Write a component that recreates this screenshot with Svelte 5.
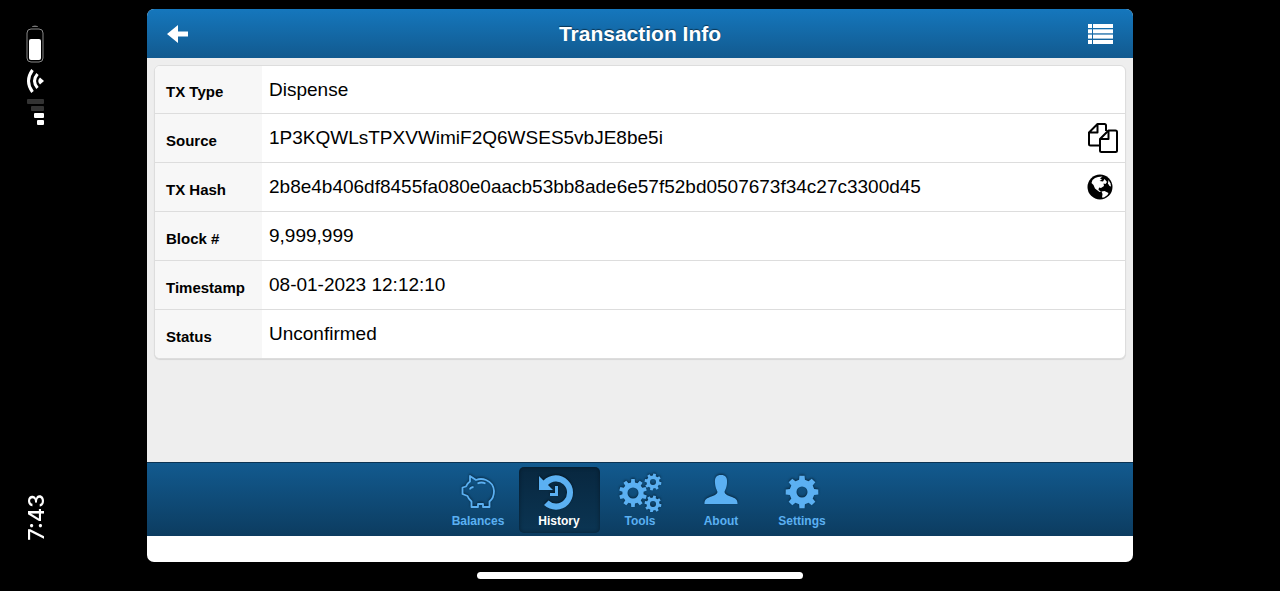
<script lang="ts">
	const fields = [
		{ label: "TX Type", value: "Dispense", action: "" },
		{ label: "Source", value: "1P3KQWLsTPXVWimiF2Q6WSES5vbJE8be5i", action: "copy" },
		{
			label: "TX Hash",
			value: "2b8e4b406df8455fa080e0aacb53bb8ade6e57f52bd0507673f34c27c3300d45",
			action: "explorer",
		},
		{ label: "Block #", value: "9,999,999", action: "" },
		{ label: "Timestamp", value: "08-01-2023 12:12:10", action: "" },
		{ label: "Status", value: "Unconfirmed", action: "" },
	];

	const tabs = ["Balances", "History", "Tools", "About", "Settings"];
	let activeTab = $state("History");

	// outline of a cog with a round hole, r = outer radius
	function cog(cx: number, cy: number, r: number, hole: number, teeth = 8, turn = 0) {
		const root = r * 0.76;
		const step = (Math.PI * 2) / teeth;
		const points: string[] = [];
		for (let i = 0; i < teeth; i++) {
			const a = i * step + turn - Math.PI / 2;
			for (const [radius, offset] of [
				[root, -0.3],
				[r, -0.2],
				[r, 0.2],
				[root, 0.3],
			]) {
				const t = a + offset * step;
				points.push(`${(cx + radius * Math.cos(t)).toFixed(2)} ${(cy + radius * Math.sin(t)).toFixed(2)}`);
			}
		}
		return (
			`M${points.join("L")}Z` +
			`M${cx - hole} ${cy}a${hole} ${hole} 0 1 0 ${hole * 2} 0a${hole} ${hole} 0 1 0 ${-hole * 2} 0Z`
		);
	}
</script>

<div class="device">
	<aside class="status">
		<svg width="18" height="102" viewBox="0 0 18 102" aria-hidden="true">
			<path d="M6 2Q6 .5 9 .5T12 2Z" fill="#777" />
			<rect x="1" y="4" width="16" height="33" rx="4" fill="none" stroke="#888" />
			<rect x="3" y="14" width="12" height="21" rx="2" fill="#fff" />
			<g fill="none" stroke="#fff" stroke-width="3">
				<path d="M6.500 45Q-1.500 56 6.500 67" />
				<path d="M11.500 49Q5.500 56 11.500 63" />
			</g>
			<path d="M18 56l-4-3.500q-3.500 3.500 0 7Z" fill="#fff" />
			<g fill="#333">
				<rect x="1" y="74" width="17" height="5" rx="1" />
				<rect x="5" y="81" width="13" height="5" rx="1" />
			</g>
			<g fill="#fff">
				<rect x="8" y="88" width="10" height="5" rx="1" />
				<rect x="11" y="95" width="7" height="5" rx="1" />
			</g>
		</svg>
		<time>7:43</time>
	</aside>

	<main class="app">
		<header class="titlebar">
			<button type="button" aria-label="Back">
				<svg width="26" height="20" viewBox="0 0 26 20" fill="#fff">
					<path d="M1 10L12 1V7.500H22V12.500H12V19Z" />
				</svg>
			</button>
			<h1>Transaction Info</h1>
			<button type="button" aria-label="Menu">
				<svg width="26" height="22" viewBox="0 0 26 22" fill="#fff">
					{#each [1, 6.3, 11.6, 17] as y}
						<rect x="0" {y} width="4" height="4" />
						<rect x="5" {y} width="20" height="4" />
					{/each}
				</svg>
			</button>
		</header>

		<section class="content">
			<table>
				<tbody>
					{#each fields as field}
						<tr>
							<th scope="row">{field.label}</th>
							<td>
								<div class="value">
									<span>{field.value}</span>
									{#if field.action === "copy"}
										<button type="button" aria-label="Copy address">
											<svg width="30" height="30" viewBox="0 0 30 30" fill="none" stroke="#000" stroke-width="2" stroke-linejoin="round">
												<path d="M11 22.500H2.500Q1 22.500 1 21V9.500L9.500 1H16.500Q18 1 18 2.500V8M9.500 1V9.500H1" />
												<path d="M20.500 7.500H27.500Q29 7.500 29 9V27.500Q29 29 27.500 29H13.500Q12 29 12 27.500V16Z" fill="#fff" />
												<path d="M20.500 7.500V16H12" />
											</svg>
										</button>
									{:else if field.action === "explorer"}
										<button type="button" class="globe" aria-label="Open in explorer">
											<svg width="26" height="26" viewBox="0 0 26 26">
												<circle cx="13" cy="13" r="12.500" />
												<path
													d="M4.500 9L5.500 6L8 4L11 3L15.500 2.500L13 4.500L15 5.500L12.500 7L16 7.500L17.500 5L20 8L18.500 10L16.500 9.500L17 12L14 14L12 13.500L11.500 16L14 17.500L12.500 18L8 14.500L6.500 11Z"
													fill="#fff"
												/>
												<path d="M14.500 17.500L17.500 17L21.500 19L20.500 21L17 23.500L15 23.500L15.500 20Z" fill="#fff" />
												<path d="M21.500 6L23.500 9.500L24 12.500L22.500 12L21 9.500Z" fill="#fff" />
											</svg>
										</button>
									{/if}
								</div>
							</td>
						</tr>
					{/each}
				</tbody>
			</table>
		</section>

		<nav class="tabbar">
			{#each tabs as tab}
				<button type="button" class:active={tab === activeTab} onclick={() => (activeTab = tab)}>
					<svg width="44" height="40" viewBox="0 0 44 40" fill="currentColor" fill-rule="evenodd">
						{#if tab === "Balances"}
							<g fill="none" stroke="currentColor" stroke-width="1.800" stroke-linejoin="round">
								<path
									d="M14 4L20 8Q25 6 30 8Q37.500 11 38 19Q38 26 33.500 29.500V35H27V32H22V35H15.500V29.500Q12.500 27 11.500 24L6.500 22V15.500L10 14.500Q11 11.500 14 9.500Z"
								/>
								<path d="M21.500 11.500Q25.500 9.500 29.500 11.500" />
								<path d="M14 17.500Q14 15.500 17.500 15" />
							</g>
						{:else if tab === "History"}
							<path
								d="M2 4L6.500 8.500A17.200 17.200 0 1 1 7 33L11.500 28.500A11 11 0 1 0 11 13L16 18H2Z"
							/>
							<path d="M18 14H21V24H13V21H18Z" />
						{:else if tab === "Tools"}
							<path d={cog(15, 21, 14, 5.5, 10)} />
							<path d={cog(35, 10, 8.5, 3, 8, 0.2)} />
							<path d={cog(35, 32, 8.5, 3, 8, 0.2)} />
						{:else if tab === "About"}
							<path
								d="M22 3C26.500 3 28.500 5.500 28 11C27.700 16 26 18 25.500 20C26 22.500 29 23.500 33 25C37.500 26.800 38.500 28 38.500 32H5.500C5.500 28 6.500 26.800 11 25C15 23.500 18 22.500 18.500 20C18 18 16.300 16 16 11C15.500 5.500 17.500 3 22 3Z"
							/>
						{:else}
							<path d={cog(22, 20, 16.5, 5.5)} />
						{/if}
					</svg>
					<span>{tab}</span>
				</button>
			{/each}
		</nav>
	</main>

	<div class="home"></div>
</div>

<style>
	:global(body) {
		margin: 0;
		background: #000;
	}
	.device {
		display: grid;
		grid-template-columns: 147px 1fr 147px;
		grid-template-rows: 1fr auto;
		row-gap: 10px;
		box-sizing: border-box;
		min-height: 100vh;
		padding: 9px 0 12px;
		background: #000;
		font-family: "Liberation Sans", Arial, sans-serif;
	}
	button {
		border: 0;
		padding: 0;
		background: none;
		font: inherit;
		cursor: pointer;
	}
	svg {
		display: block;
	}
	.status {
		display: flex;
		flex-direction: column;
		justify-content: space-between;
		align-items: flex-start;
		padding: 16px 0 21px 26px;
	}
	time {
		color: #fff;
		font: 500 22px/20px Inter, sans-serif;
		writing-mode: vertical-rl;
		transform: rotate(180deg);
	}
	.app {
		display: flex;
		flex-direction: column;
		overflow: hidden;
		padding-bottom: 26px;
		border-radius: 7px;
		background: #fff;
	}
	.titlebar {
		display: flex;
		align-items: center;
		justify-content: space-between;
		height: 49px;
		padding: 0 19px;
		background: linear-gradient(#1577bd, #125a8f);
	}
	h1 {
		margin: 0;
		color: #fff;
		font-size: 21px;
		line-height: 24px;
		text-shadow: 0 -1px 1px rgba(0, 0, 0, 0.5);
	}
	.content {
		flex: 1;
		padding: 7px;
		background: #eee;
	}
	table {
		width: 100%;
		border: 1px solid #ddd;
		border-radius: 6px;
		border-spacing: 0;
		overflow: hidden;
		background: #fff;
		box-shadow: 0 1px 1px rgba(0, 0, 0, 0.1);
	}
	th,
	td {
		box-sizing: border-box;
		height: 49px;
		padding: 0;
		border-bottom: 1px solid #ddd;
	}
	tr:first-child > *,
	tr:last-child > * {
		height: 48px;
	}
	tr:has(button) > * {
		height: 49px;
	}
	tr:last-child > * {
		border-bottom: 0;
	}
	th {
		width: 107px;
		padding: 4px 0 0 11px;
		background: #f7f7f7;
		color: #000;
		font-size: 15px;
		text-align: left;
	}
	.value {
		display: flex;
		align-items: center;
		justify-content: space-between;
		padding: 0 7px;
		color: #000;
		font-size: 19px;
		line-height: 22px;
	}
	.globe {
		padding-right: 5px;
	}
	.tabbar {
		display: flex;
		justify-content: center;
		box-sizing: border-box;
		height: 74px;
		padding: 4px 0 3px;
		border-top: 1px solid #0b3353;
		background: linear-gradient(#125a8f, #0c3c60);
	}
	.tabbar button {
		display: flex;
		flex-direction: column;
		align-items: center;
		width: 81px;
		padding-top: 5px;
		border-radius: 5px;
		color: #5bb0f2;
		font-size: 12px;
		font-weight: 700;
		line-height: 18px;
	}
	.tabbar svg {
		filter: drop-shadow(0 -1px 1px rgba(0, 0, 0, 0.5));
	}
	.tabbar .active {
		background: linear-gradient(#08273f, #0b3553);
		box-shadow: inset 0 0 4px rgba(0, 0, 0, 0.4);
	}
	.active span {
		color: #fff;
	}
	.home {
		grid-column: 2;
		justify-self: center;
		width: 33%;
		height: 7px;
		border-radius: 4px;
		background: #fff;
	}
</style>
